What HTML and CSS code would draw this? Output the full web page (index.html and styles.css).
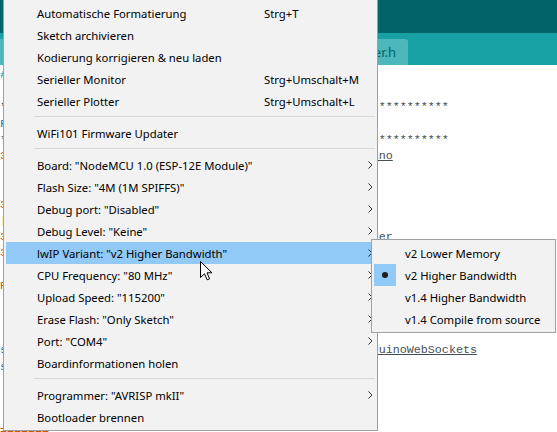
FILE: index.html
```html
<!DOCTYPE html>
<html lang="de">
<head>
<meta charset="utf-8">
<title>Arduino – Werkzeuge</title>
<link rel="stylesheet" href="styles.css">
</head>
<body>
<div class="ide">
  <div class="toolbar"></div>
  <div class="tabbar">
    <div class="tab tab-first">Sketch</div>
    <div class="tab tab-cur">Helper.h</div>
  </div>
<pre class="code"><span class="t">#</span>include &lt;ESP8266WiFi.h&gt;

****************************************************************
<span class="b">F</span>
****************************************************************
<span class="o">3</span> <span class="u">https://github.com/esp8266/Arduino/examples/Sketch.ino</span>


<span class="o">3</span>
<span class="o">|</span>
<span class="o">3</span>    // Einstellungen werden gespeichert vom WiFiManager
<span class="o">3</span>

<span class="o">R</span>



<span class="b">s</span> * Bibliothek von:   <span class="u">https://github.com/Links2004/arduinoWebSockets</span>
<span class="b">s</span>



<span class="o">=======</span></pre>
</div>

<div class="menu">
  <div class="item"><span>Automatische Formatierung</span><span>Strg+T</span><span></span></div>
  <div class="item"><span>Sketch archivieren</span><span></span><span></span></div>
  <div class="item"><span>Kodierung korrigieren &amp; neu laden</span><span></span><span></span></div>
  <div class="item"><span>Serieller Monitor</span><span>Strg+Umschalt+M</span><span></span></div>
  <div class="item"><span>Serieller Plotter</span><span>Strg+Umschalt+L</span><span></span></div>
  <div class="sep"></div>
  <div class="item"><span>WiFi101 Firmware Updater</span><span></span><span></span></div>
  <div class="sep"></div>
  <div class="item"><span>Board: "NodeMCU 1.0 (ESP-12E Module)"</span><span></span><svg class="arrow" viewBox="0 0 5 8" width="5" height="8"><polyline points="0.5,0.5 4,4 0.5,7.5"/></svg></div>
  <div class="item"><span>Flash Size: "4M (1M SPIFFS)"</span><span></span><svg class="arrow" viewBox="0 0 5 8" width="5" height="8"><polyline points="0.5,0.5 4,4 0.5,7.5"/></svg></div>
  <div class="item"><span>Debug port: "Disabled"</span><span></span><svg class="arrow" viewBox="0 0 5 8" width="5" height="8"><polyline points="0.5,0.5 4,4 0.5,7.5"/></svg></div>
  <div class="item"><span>Debug Level: "Keine"</span><span></span><svg class="arrow" viewBox="0 0 5 8" width="5" height="8"><polyline points="0.5,0.5 4,4 0.5,7.5"/></svg></div>
  <div class="item active"><span>lwIP Variant: "v2 Higher Bandwidth"</span><span></span><svg class="arrow" viewBox="0 0 5 8" width="5" height="8"><polyline points="0.5,0.5 4,4 0.5,7.5"/></svg></div>
  <div class="item"><span>CPU Frequency: "80 MHz"</span><span></span><svg class="arrow" viewBox="0 0 5 8" width="5" height="8"><polyline points="0.5,0.5 4,4 0.5,7.5"/></svg></div>
  <div class="item"><span>Upload Speed: "115200"</span><span></span><svg class="arrow" viewBox="0 0 5 8" width="5" height="8"><polyline points="0.5,0.5 4,4 0.5,7.5"/></svg></div>
  <div class="item"><span>Erase Flash: "Only Sketch"</span><span></span><svg class="arrow" viewBox="0 0 5 8" width="5" height="8"><polyline points="0.5,0.5 4,4 0.5,7.5"/></svg></div>
  <div class="item"><span>Port: "COM4"</span><span></span><svg class="arrow" viewBox="0 0 5 8" width="5" height="8"><polyline points="0.5,0.5 4,4 0.5,7.5"/></svg></div>
  <div class="item"><span>Boardinformationen holen</span><span></span><span></span></div>
  <div class="sep"></div>
  <div class="item"><span>Programmer: "AVRISP mkII"</span><span></span><svg class="arrow" viewBox="0 0 5 8" width="5" height="8"><polyline points="0.5,0.5 4,4 0.5,7.5"/></svg></div>
  <div class="item"><span>Bootloader brennen</span><span></span><span></span></div>
</div>

<div class="submenu">
  <div class="subitem"><span class="check"></span><span class="sublabel">v2 Lower Memory</span></div>
  <div class="subitem"><span class="check checked"><span class="dot"></span></span><span class="sublabel">v2 Higher Bandwidth</span></div>
  <div class="subitem"><span class="check"></span><span class="sublabel">v1.4 Higher Bandwidth</span></div>
  <div class="subitem"><span class="check"></span><span class="sublabel">v1.4 Compile from source</span></div>
</div>

<svg class="cursor" width="13" height="20" viewBox="0 0 13 20">
  <path d="M0.5,0.5 L0.5,16.5 L4.5,12.8 L7.2,18.8 L9.6,17.8 L7,11.8 L12,11.8 Z" fill="#fff" stroke="#000" stroke-width="1" stroke-linejoin="miter"/>
</svg>
</body>
</html>
```
FILE: styles.css
```css
* { box-sizing: border-box; }
html, body { margin: 0; }
body {
  width: 557px;
  height: 432px;
  overflow: hidden;
  position: relative;
  background: #ffffff;
  font-family: "Noto Sans", sans-serif;
}

.toolbar { height: 33px; background: #006468; }
.tabbar {
  height: 32px;
  background: #17a1a5;
  display: flex;
  align-items: flex-end;
}
.tab {
  height: 26px;
  background: #4db7bb;
  color: #006468;
  font: 13px "Noto Sans", sans-serif;
  display: flex;
  align-items: center;
  justify-content: flex-end;
  padding-right: 12px;
  border-radius: 0 3px 0 0;
}
.tab-first { width: 90px; }
.tab-cur { margin-left: 210px; width: 108px; }

.code {
  margin: 0;
  padding: 2px 0 0 0;
  font: 11.7px/16.2px "Liberation Mono", monospace;
  color: #434f54;
}
.code .o { color: #d35400; }
.code .b { color: #2c6fa8; }
.code .t { color: #00979c; }
.code .u { text-decoration: underline; }

.menu {
  position: absolute;
  left: 3px;
  top: -1px;
  width: 375px;
  background: #f2f2f2;
  border: 1px solid #a0a0a0;
  padding: 2px;
  font: 11.3px "Noto Sans", sans-serif;
  color: #000;
}
.item {
  height: 22px;
  display: grid;
  grid-template-columns: 227px 1fr 6px;
  align-items: center;
  padding-left: 31px;
  padding-right: 1px;
  white-space: nowrap;
}
.item.active { background: #91c9f7; }
.arrow { fill: none; stroke: #333; stroke-width: 1; }
.sep {
  height: 1px;
  background: #d7d7d7;
  margin: 4px 0 5px 28px;
}

.submenu {
  position: absolute;
  left: 371px;
  top: 239px;
  width: 185px;
  background: #f2f2f2;
  border: 1px solid #a0a0a0;
  padding: 2px;
  font: 11.3px "Noto Sans", sans-serif;
  color: #000;
}
.subitem {
  height: 22px;
  display: flex;
  align-items: center;
  white-space: nowrap;
}
.check {
  width: 22px;
  height: 22px;
  display: flex;
  align-items: center;
  justify-content: center;
}
.check.checked { background: #91c9f7; }
.dot {
  width: 6px;
  height: 6px;
  border-radius: 50%;
  background: #1e1e1e;
}
.sublabel { padding-left: 9px; }

.cursor {
  position: absolute;
  left: 200px;
  top: 261px;
}
```
